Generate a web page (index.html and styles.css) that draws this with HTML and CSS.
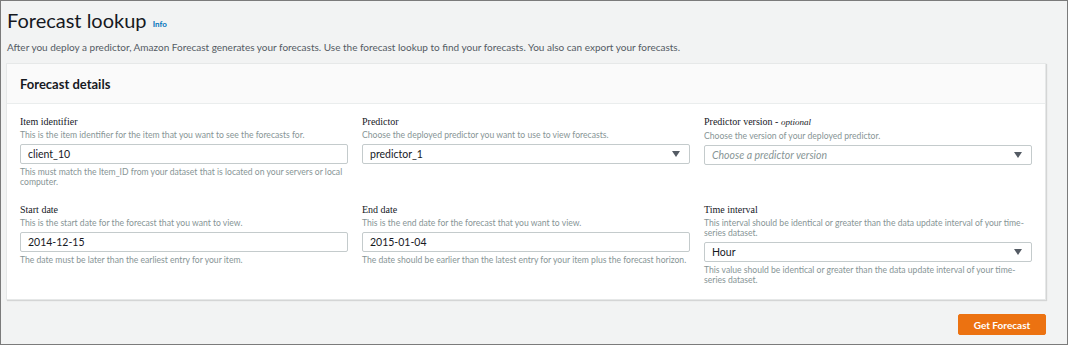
FILE: index.html
```html
<!DOCTYPE html>
<html>
<head>
  <title>Forecast lookup</title>
  <link rel="stylesheet" href="styles.css">
</head>
<body>
  <div class="page">
    <h1 class="page-title">Forecast lookup <a href="#" class="info-link">Info</a></h1>
    <p class="page-desc">After you deploy a predictor, Amazon Forecast generates your forecasts. Use the forecast lookup to find your forecasts. You also can export your forecasts.</p>

    <div class="panel">
      <div class="panel-header">
        <h2 class="panel-title">Forecast details</h2>
      </div>

      <div class="panel-body">
        <div class="field">
          <div class="field-label">Item identifier</div>
          <div class="field-desc">This is the item identifier for the item that you want to see the forecasts for.</div>
          <div class="input">client_10</div>
          <div class="field-hint">This must match the Item_ID from your dataset that is located on your servers or local computer.</div>
        </div>

        <div class="field">
          <div class="field-label">Predictor</div>
          <div class="field-desc">Choose the deployed predictor you want to use to view forecasts.</div>
          <div class="input select">
            <span>predictor_1</span>
            <span class="caret"></span>
          </div>
        </div>

        <div class="field">
          <div class="field-label">Predictor version - <em>optional</em></div>
          <div class="field-desc">Choose the version of your deployed predictor.</div>
          <div class="input select">
            <span class="placeholder">Choose a predictor version</span>
            <span class="caret"></span>
          </div>
        </div>

        <div class="field">
          <div class="field-label">Start date</div>
          <div class="field-desc">This is the start date for the forecast that you want to view.</div>
          <div class="input">2014-12-15</div>
          <div class="field-hint">The date must be later than the earliest entry for your item.</div>
        </div>

        <div class="field">
          <div class="field-label">End date</div>
          <div class="field-desc">This is the end date for the forecast that you want to view.</div>
          <div class="input">2015-01-04</div>
          <div class="field-hint">The date should be earlier than the latest entry for your item plus the forecast horizon.</div>
        </div>

        <div class="field">
          <div class="field-label">Time interval</div>
          <div class="field-desc">This interval should be identical or greater than the data update interval of your time-series dataset.</div>
          <div class="input select">
            <span>Hour</span>
            <span class="caret"></span>
          </div>
          <div class="field-hint">This value should be identical or greater than the data update interval of your time-series dataset.</div>
        </div>
      </div>
    </div>

    <div class="actions">
      <button class="btn-primary">Get Forecast</button>
    </div>
  </div>
</body>
</html>
```

FILE: styles.css
```css
* {
  margin: 0;
  padding: 0;
  box-sizing: border-box;
}

body {
  background: #f2f3f3;
  font-family: 'Lato', 'Open Sans', sans-serif;
  color: #16191f;
}

.page {
  height: 345px;
  border: 1px solid #7b7b7b;
  padding: 0 21px 0 5px;
  background: #f2f3f3;
}

.page-title {
  font-size: 20px;
  font-weight: 400;
  line-height: 26px;
  padding: 6px 0 0 1px;
  color: #16191f;
}

.info-link {
  font-size: 8px;
  font-weight: 700;
  color: #0073bb;
  text-decoration: none;
  margin-left: 1px;
  vertical-align: 1px;
}

.page-desc {
  font-size: 10px;
  line-height: 16px;
  color: #545b64;
  padding: 2px 0 0 1px;
}

.panel {
  margin-top: 8px;
  background: #fff;
  border: 1px solid #e6e8e8;
  box-shadow: 1px 1px 1px rgba(0, 0, 0, 0.12);
}

.panel-header {
  background: #fafafa;
  border-bottom: 1px solid #eaeded;
  height: 40px;
  padding: 0 13px;
  display: flex;
  align-items: center;
}

.panel-title {
  font-size: 13px;
  font-weight: 700;
  color: #16191f;
}

.panel-body {
  display: grid;
  grid-template-columns: repeat(3, 1fr);
  column-gap: 14px;
  row-gap: 16px;
  padding: 11px 13px 14px 13px;
  align-items: start;
}

.field-label {
  font-family: 'Liberation Serif', serif;
  font-size: 10px;
  line-height: 13px;
  color: #16191f;
}

.field-label em {
  font-size: 9px;
}

.field-desc,
.field-hint {
  font-size: 8.6px;
  line-height: 10px;
  color: #879596;
}

.field-desc {
  margin-top: 2px;
}

.field-hint {
  margin-top: 3px;
}

.input {
  margin-top: 4px;
  height: 20px;
  border: 1px solid #c4cbcc;
  border-radius: 2px;
  padding: 0 7px;
  font-size: 10.5px;
  color: #16191f;
  display: flex;
  align-items: center;
  justify-content: space-between;
}

.placeholder {
  color: #879596;
  font-style: italic;
}

.caret {
  width: 0;
  height: 0;
  border-left: 4px solid transparent;
  border-right: 4px solid transparent;
  border-top: 6px solid #545b64;
  margin-right: 2px;
}

.actions {
  display: flex;
  justify-content: flex-end;
  margin-top: 14px;
}

.btn-primary {
  width: 88px;
  height: 21px;
  background: #ec7211;
  border: 1px solid #ec7211;
  border-radius: 2px;
  color: #fff;
  font-family: 'Lato', 'Open Sans', sans-serif;
  font-size: 10px;
  font-weight: 700;
}
```
